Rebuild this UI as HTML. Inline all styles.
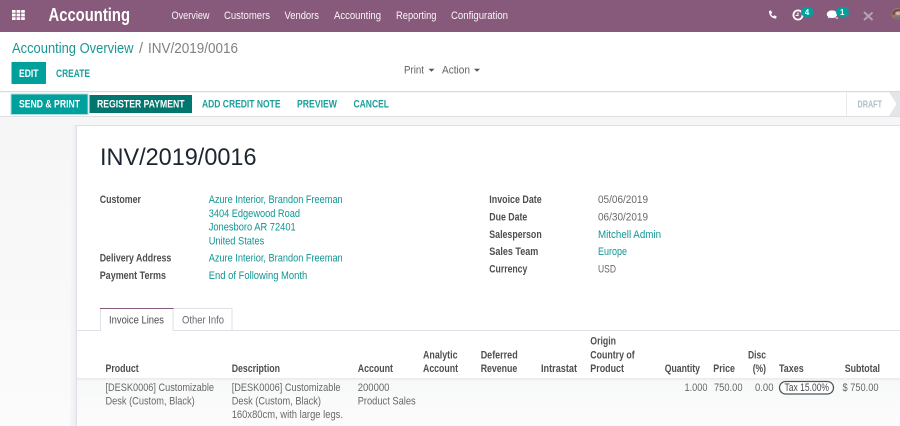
<!DOCTYPE html>
<html>
<head>
<meta charset="utf-8">
<style>
html,body{margin:0;padding:0;width:900px;height:426px;overflow:hidden;background:#fff}
svg{display:block;font-family:"Liberation Sans",sans-serif;filter:blur(.35px)}
text{font-size:11.2px;fill:#686868}
.m{fill:#fff;font-size:11.2px;fill-opacity:.95}
.l{fill:#4e4e4e;font-weight:bold;font-size:11px}
.a{fill:#0f9693}
.b{font-weight:bold;font-size:10.6px;fill:#fff}
.t{font-weight:bold;font-size:10.6px;fill:#1a9f9c}
</style>
</head>
<body>
<svg width="900" height="426" viewBox="0 0 900 426" xmlns="http://www.w3.org/2000/svg">
<defs>
<linearGradient id="bg" x1="0" y1="0" x2="0" y2="1"><stop offset="0" stop-color="#f6f6f6"/><stop offset="1" stop-color="#fbfbfb"/></linearGradient>
<linearGradient id="row" x1="0" y1="0" x2="0" y2="1"><stop offset="0" stop-color="#f7f8f8"/><stop offset="1" stop-color="#fcfcfc"/></linearGradient>
<linearGradient id="sh" x1="0" y1="0" x2="0" y2="1"><stop offset="0" stop-color="#e8e8e8"/><stop offset="1" stop-color="#f7f8f8"/></linearGradient>
<linearGradient id="shl" x1="0" y1="0" x2="1" y2="0"><stop offset="0" stop-color="#f8f8f8"/><stop offset="1" stop-color="#ececee"/></linearGradient>
</defs>

<!-- navbar -->
<rect width="900" height="32" fill="#875a7b"/>
<g fill="#fff">
<rect x="12" y="10" width="3.6" height="2.8"/><rect x="16.6" y="10" width="3.6" height="2.8"/><rect x="21.2" y="10" width="3.6" height="2.8"/>
<rect x="12" y="13.6" width="3.6" height="2.8"/><rect x="16.6" y="13.6" width="3.6" height="2.8"/><rect x="21.2" y="13.6" width="3.6" height="2.8"/>
<rect x="12" y="17.2" width="3.6" height="2.8"/><rect x="16.6" y="17.2" width="3.6" height="2.8"/><rect x="21.2" y="17.2" width="3.6" height="2.8"/>
</g>
<text x="48.5" y="21" textLength="81.5" lengthAdjust="spacingAndGlyphs" style="font-size:18.5px;fill:#fff;font-weight:bold">Accounting</text>
<text class="m" x="171.5" y="19" textLength="38" lengthAdjust="spacingAndGlyphs">Overview</text>
<text class="m" x="224" y="19" textLength="46" lengthAdjust="spacingAndGlyphs">Customers</text>
<text class="m" x="284.5" y="19" textLength="34.5" lengthAdjust="spacingAndGlyphs">Vendors</text>
<text class="m" x="334" y="19" textLength="47" lengthAdjust="spacingAndGlyphs">Accounting</text>
<text class="m" x="396" y="19" textLength="40.5" lengthAdjust="spacingAndGlyphs">Reporting</text>
<text class="m" x="451" y="19" textLength="57" lengthAdjust="spacingAndGlyphs">Configuration</text>

<!-- systray -->
<path d="M769 11 l2 -.6 1.2 2.6 -1.2 1 c.5 1.2 1.2 1.9 2.3 2.4 l1 -1.1 2.4 1.3 -.6 1.9 c-3.9 .4 -7.4 -3.4 -7.1 -7.5z" fill="#fff"/>
<circle cx="798" cy="15" r="4.6" fill="none" stroke="#fff" stroke-width="1.8"/>
<path d="M798 12.4 v3 h-2.4" fill="none" stroke="#fff" stroke-width="1.1"/>
<rect x="801" y="7" width="12.5" height="10" rx="5" fill="#00a09d"/>
<text x="804.7" y="15" style="font-size:8px;font-weight:bold;fill:#fff">4</text>
<ellipse cx="832" cy="14.2" rx="5.3" ry="3.8" fill="#fff"/>
<path d="M829 16 l-1.2 2.4 3.4 -1.4z" fill="#fff"/>
<path d="M834 17.5 h3.6 l.6 1.4 -2 -.5z" fill="#fff"/>
<rect x="836" y="7" width="13" height="10" rx="5" fill="#00a09d"/>
<text x="840" y="15" style="font-size:8px;font-weight:bold;fill:#fff">1</text>
<path d="M864 12 l8.5 8 M872.5 12.5 l-8.5 7.5" stroke="#b5a5b1" stroke-width="1.9" fill="none"/>
<circle cx="897.5" cy="14" r="6" fill="#9a7a6e"/>
<circle cx="898" cy="12.5" r="2.6" fill="#d2b4a2"/>
<path d="M892 14 q1 -5 6 -5 l2 .5 v2 q-5 -1 -6 4z" fill="#6b4f49"/>
<path d="M893 18 q4 -3 7 -1 v3 h-5z" fill="#7a7078"/>

<!-- control panel -->
<text x="12" y="53" textLength="121.5" lengthAdjust="spacingAndGlyphs" style="font-size:14.5px;fill:#1a9794">Accounting Overview</text>
<text x="139" y="53" style="font-size:14.5px;fill:#808080">/</text>
<text x="148" y="53" textLength="90" lengthAdjust="spacingAndGlyphs" style="font-size:14.5px;fill:#808080">INV/2019/0016</text>
<rect x="11.5" y="62" width="34.5" height="22" fill="#00a09d"/>
<text class="b" x="19" y="77" textLength="19.5" lengthAdjust="spacingAndGlyphs">EDIT</text>
<text class="t" x="56" y="77" textLength="34" lengthAdjust="spacingAndGlyphs">CREATE</text>
<text x="404" y="73.5" textLength="20" lengthAdjust="spacingAndGlyphs" style="fill:#626262">Print</text>
<path d="M428.5 68.7 h6 l-3 3z" fill="#555"/>
<text x="442" y="73.5" textLength="28" lengthAdjust="spacingAndGlyphs" style="fill:#626262">Action</text>
<path d="M474 68.7 h6 l-3 3z" fill="#555"/>

<!-- status bar -->
<rect x="0" y="91" width="900" height="1.2" fill="#d8dadd"/>
<rect x="0" y="116" width="900" height="1.2" fill="#dcdfe3"/>
<rect x="0" y="117.2" width="900" height="309" fill="url(#bg)"/>
<rect x="10.5" y="93.5" width="78" height="21.5" fill="#a9dedd"/>
<rect x="11.5" y="94.5" width="76" height="19.5" fill="#00a09d"/>
<text class="b" x="19" y="107.5" textLength="61" lengthAdjust="spacingAndGlyphs">SEND &amp; PRINT</text>
<rect x="89.5" y="95" width="102.5" height="18" fill="#00766f"/>
<text class="b" x="97" y="107.5" textLength="87.5" lengthAdjust="spacingAndGlyphs">REGISTER PAYMENT</text>
<text class="t" x="202" y="107.5" textLength="78.5" lengthAdjust="spacingAndGlyphs">ADD CREDIT NOTE</text>
<text class="t" x="297" y="107.5" textLength="40" lengthAdjust="spacingAndGlyphs">PREVIEW</text>
<text class="t" x="353.5" y="107.5" textLength="35.5" lengthAdjust="spacingAndGlyphs">CANCEL</text>
<rect x="846" y="92" width="1" height="24" fill="#e9ebed"/>
<path d="M889 92 L896.5 104 L889 116 H900 V92z" fill="#e3e6e8"/>
<text x="857.5" y="107.5" textLength="24.5" lengthAdjust="spacingAndGlyphs" style="font-weight:bold;font-size:10px;fill:#aebfc7">DRAFT</text>

<!-- sheet -->
<rect x="70" y="125" width="6.5" height="301" fill="url(#shl)"/>
<rect x="76.5" y="125.5" width="830" height="310" fill="#fff" stroke="#dde0e8"/>
<text x="100" y="165" textLength="156.5" lengthAdjust="spacingAndGlyphs" style="font-size:24px;fill:#1c2530">INV/2019/0016</text>

<text class="l" x="99.7" y="203" textLength="41.3" lengthAdjust="spacingAndGlyphs">Customer</text>
<text class="a" x="208.7" y="203" textLength="134" lengthAdjust="spacingAndGlyphs">Azure Interior, Brandon Freeman</text>
<text class="a" x="208.7" y="217" textLength="91.3" lengthAdjust="spacingAndGlyphs">3404 Edgewood Road</text>
<text class="a" x="208.7" y="230.5" textLength="87" lengthAdjust="spacingAndGlyphs">Jonesboro AR 72401</text>
<text class="a" x="208.7" y="244.5" textLength="55.6" lengthAdjust="spacingAndGlyphs">United States</text>
<text class="l" x="99.7" y="261.5" textLength="71.6" lengthAdjust="spacingAndGlyphs">Delivery Address</text>
<text class="a" x="208.7" y="261.5" textLength="134" lengthAdjust="spacingAndGlyphs">Azure Interior, Brandon Freeman</text>
<text class="l" x="99.7" y="279" textLength="66.3" lengthAdjust="spacingAndGlyphs">Payment Terms</text>
<text class="a" x="208.7" y="279" textLength="98.6" lengthAdjust="spacingAndGlyphs">End of Following Month</text>

<text class="l" x="489.3" y="203" textLength="52.4" lengthAdjust="spacingAndGlyphs">Invoice Date</text>
<text x="598" y="203" textLength="50" lengthAdjust="spacingAndGlyphs">05/06/2019</text>
<text class="l" x="489.3" y="220.5" textLength="38" lengthAdjust="spacingAndGlyphs">Due Date</text>
<text x="598" y="220.5" textLength="50" lengthAdjust="spacingAndGlyphs">06/30/2019</text>
<text class="l" x="489.3" y="238" textLength="52.4" lengthAdjust="spacingAndGlyphs">Salesperson</text>
<text class="a" x="598" y="238" textLength="63" lengthAdjust="spacingAndGlyphs">Mitchell Admin</text>
<text class="l" x="489.3" y="255" textLength="49" lengthAdjust="spacingAndGlyphs">Sales Team</text>
<text class="a" x="598" y="255" textLength="29" lengthAdjust="spacingAndGlyphs">Europe</text>
<text class="l" x="489.3" y="272.5" textLength="38" lengthAdjust="spacingAndGlyphs">Currency</text>
<text x="598" y="272.5" textLength="18" lengthAdjust="spacingAndGlyphs">USD</text>

<!-- tabs -->
<rect x="77" y="330" width="823" height="1" fill="#dee2e8"/>
<path d="M173.5 308.500 H232 V330" fill="none" stroke="#dee2e8"/>
<rect x="100" y="308" width="73.5" height="23.5" fill="#fff"/>
<path d="M100.5 331 V308.500 H173 V331" fill="none" stroke="#dee2e8"/>
<rect x="100" y="308" width="73.5" height="1" fill="#875a7b"/>
<text x="109" y="323.5" textLength="55" lengthAdjust="spacingAndGlyphs" style="fill:#4e4e4e">Invoice Lines</text>
<text x="182" y="323.5" textLength="42" lengthAdjust="spacingAndGlyphs">Other Info</text>

<!-- table header -->
<text class="l" x="105.5" y="372" textLength="33.2" lengthAdjust="spacingAndGlyphs">Product</text>
<text class="l" x="231.7" y="372" textLength="48.3" lengthAdjust="spacingAndGlyphs">Description</text>
<text class="l" x="357.7" y="372" textLength="35.3" lengthAdjust="spacingAndGlyphs">Account</text>
<text class="l" x="423" y="358.5" textLength="34.5" lengthAdjust="spacingAndGlyphs">Analytic</text>
<text class="l" x="423" y="372" textLength="35" lengthAdjust="spacingAndGlyphs">Account</text>
<text class="l" x="480.7" y="358.5" textLength="37" lengthAdjust="spacingAndGlyphs">Deferred</text>
<text class="l" x="480.7" y="372" textLength="36.6" lengthAdjust="spacingAndGlyphs">Revenue</text>
<text class="l" x="541" y="372" textLength="36" lengthAdjust="spacingAndGlyphs">Intrastat</text>
<text class="l" x="590.3" y="344.5" textLength="25.7" lengthAdjust="spacingAndGlyphs">Origin</text>
<text class="l" x="590.3" y="358.5" textLength="44.4" lengthAdjust="spacingAndGlyphs">Country of</text>
<text class="l" x="590.3" y="372" textLength="33.7" lengthAdjust="spacingAndGlyphs">Product</text>
<text class="l" x="664.7" y="372" textLength="35.3" lengthAdjust="spacingAndGlyphs">Quantity</text>
<text class="l" x="713.3" y="372" textLength="21.7" lengthAdjust="spacingAndGlyphs">Price</text>
<text class="l" x="748" y="358.5" textLength="18" lengthAdjust="spacingAndGlyphs">Disc</text>
<text class="l" x="752.7" y="372" textLength="13.3" lengthAdjust="spacingAndGlyphs">(%)</text>
<text class="l" x="779" y="372" textLength="24.7" lengthAdjust="spacingAndGlyphs">Taxes</text>
<text class="l" x="844.7" y="372" textLength="35.3" lengthAdjust="spacingAndGlyphs">Subtotal</text>

<!-- table body -->
<rect x="77" y="378" width="823" height="48" fill="url(#row)"/>
<rect x="77" y="378" width="823" height="3" fill="url(#sh)"/>
<text x="105.5" y="391" textLength="108.5" lengthAdjust="spacingAndGlyphs">[DESK0006] Customizable</text>
<text x="105.5" y="404.5" textLength="89.2" lengthAdjust="spacingAndGlyphs">Desk (Custom, Black)</text>
<text x="231.7" y="391" textLength="108.8" lengthAdjust="spacingAndGlyphs">[DESK0006] Customizable</text>
<text x="231.7" y="404.5" textLength="89.3" lengthAdjust="spacingAndGlyphs">Desk (Custom, Black)</text>
<text x="231.7" y="418" textLength="111.3" lengthAdjust="spacingAndGlyphs">160x80cm, with large legs.</text>
<text x="357.7" y="391" textLength="31.8" lengthAdjust="spacingAndGlyphs">200000</text>
<text x="357.7" y="404.5" textLength="58" lengthAdjust="spacingAndGlyphs">Product Sales</text>
<text x="684.5" y="391" textLength="23" lengthAdjust="spacingAndGlyphs">1.000</text>
<text x="714" y="391" textLength="28.5" lengthAdjust="spacingAndGlyphs">750.00</text>
<text x="755" y="391" textLength="18.5" lengthAdjust="spacingAndGlyphs">0.00</text>
<rect x="779.5" y="381.5" width="54" height="12.5" rx="6.25" fill="#fff" stroke="#4f5460" stroke-width="1.3"/>
<text x="784.5" y="391" textLength="44.5" lengthAdjust="spacingAndGlyphs" style="fill:#4a4a4a;font-size:10.8px">Tax 15.00%</text>
<text x="842.5" y="391" textLength="36" lengthAdjust="spacingAndGlyphs">$ 750.00</text>
</svg>
</body>
</html>
